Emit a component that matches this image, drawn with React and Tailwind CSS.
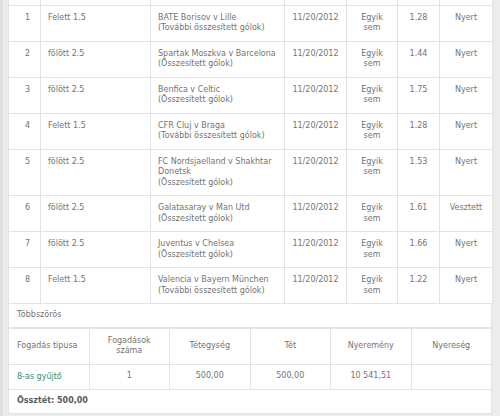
const bets = [
  { n: 1, market: "Felett 1.5", match: ["BATE Borisov v Lille", "(További összesített gólok)"], odds: "1.28", result: "Nyert" },
  { n: 2, market: "fölött 2.5", match: ["Spartak Moszkva v Barcelona", "(Összesített gólok)"], odds: "1.44", result: "Nyert" },
  { n: 3, market: "fölött 2.5", match: ["Benfica v Celtic", "(Összesített gólok)"], odds: "1.75", result: "Nyert" },
  { n: 4, market: "Felett 1.5", match: ["CFR Cluj v Braga", "(További összesített gólok)"], odds: "1.28", result: "Nyert" },
  { n: 5, market: "fölött 2.5", match: ["FC Nordsjaelland v Shakhtar", "Donetsk", "(Összesített gólok)"], odds: "1.53", result: "Nyert" },
  { n: 6, market: "fölött 2.5", match: ["Galatasaray v Man Utd", "(Összesített gólok)"], odds: "1.61", result: "Vesztett" },
  { n: 7, market: "fölött 2.5", match: ["Juventus v Chelsea", "(Összesített gólok)"], odds: "1.66", result: "Nyert" },
  { n: 8, market: "Felett 1.5", match: ["Valencia v Bayern München", "(További összesített gólok)"], odds: "1.22", result: "Nyert" },
];

const cell = "border border-[#e3e3e3] align-top pt-[7px] pb-[7px]";
const cell2 = "border border-[#e3e3e3] align-middle";

export default function App() {
  return (
    <div
      className="w-[500px] h-[416px] overflow-hidden bg-[#ececec] border-l-[3px] border-[#e0e0e0] pl-[5px] pr-[8px] text-[8px] leading-[10.5px] text-[#737373]"
      style={{ fontFamily: '"DejaVu Sans", Verdana, sans-serif' }}
    >
      <div className="bg-white w-[484px]">
        <table className="w-full table-fixed border-collapse">
          <colgroup>
            <col className="w-[32px]" />
            <col className="w-[110px]" />
            <col className="w-[134px]" />
            <col className="w-[62px]" />
            <col className="w-[51px]" />
            <col className="w-[42px]" />
            <col className="w-[53px]" />
          </colgroup>
          <tbody>
            <tr className="h-[5px]">
              {Array.from({ length: 7 }).map((_, i) => (
                <td key={i} className="border border-t-0 border-[#e3e3e3] p-0" />
              ))}
            </tr>
            {bets.map((b) => (
              <tr key={b.n}>
                <td className={`${cell} text-right pr-[10px]`}>{b.n}</td>
                <td className={`${cell} pl-[7px]`}>{b.market}</td>
                <td className={`${cell} pl-[7px]`}>
                  {b.match.map((m, i) => (
                    <div key={i}>{m}</div>
                  ))}
                </td>
                <td className={`${cell} text-center`}>11/20/2012</td>
                <td className={`${cell} text-center`}>
                  <div>Egyik</div>
                  <div>sem</div>
                </td>
                <td className={`${cell} text-center`}>{b.odds}</td>
                <td className={`${cell} text-center`}>{b.result}</td>
              </tr>
            ))}
          </tbody>
        </table>

        <div className="border-x border-b border-[#e3e3e3] pl-[8px] pt-[6px] pb-[6px]">Többszörös</div>

        <table className="w-full table-fixed border-collapse">
          <tbody>
            <tr>
              <td className={`${cell2} pl-[8px] py-[7px]`}>Fogadás típusa</td>
              <td className={`${cell2} text-center py-[7px]`}>
                <div>Fogadások</div>
                <div>száma</div>
              </td>
              <td className={`${cell2} text-center`}>Tétegység</td>
              <td className={`${cell2} text-center`}>Tét</td>
              <td className={`${cell2} text-center`}>Nyeremény</td>
              <td className={`${cell2} text-center`}>Nyereség</td>
            </tr>
            <tr>
              <td className={`${cell2} pl-[8px] pt-[7px] pb-[6.5px] text-[#2f8f6f]`}>8-as gyűjtő</td>
              <td className={`${cell2} text-center`}>1</td>
              <td className={`${cell2} text-center`}>500,00</td>
              <td className={`${cell2} text-center`}>500,00</td>
              <td className={`${cell2} text-center`}>10 541,51</td>
              <td className={cell2} />
            </tr>
          </tbody>
        </table>

        <div className="border-x border-b border-[#e3e3e3] pl-[8px] pt-[6px] pb-[7px] font-bold text-[#5a5a5a]">
          Össztét: 500,00
        </div>
      </div>
    </div>
  );
}
